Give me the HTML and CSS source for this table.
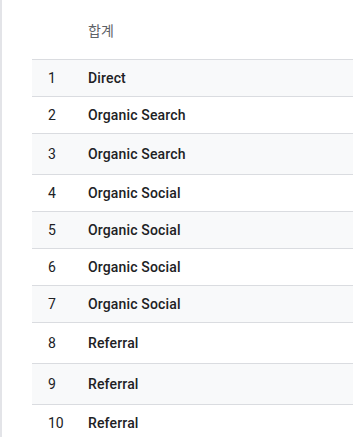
FILE: index.html
```html
<!DOCTYPE html>
<html lang="ko">
<head>
<meta charset="utf-8">
<link rel="stylesheet" href="styles.css">
</head>
<body>
<div class="page">
  <div class="table">
    <div class="head">
      <div class="num"></div>
      <div class="label head-label">합계</div>
    </div>
    <div class="row odd"><div class="num">1</div><div class="label">Direct</div></div>
    <div class="row"><div class="num">2</div><div class="label">Organic Search</div></div>
    <div class="row odd tall"><div class="num">3</div><div class="label">Organic Search</div></div>
    <div class="row"><div class="num">4</div><div class="label">Organic Social</div></div>
    <div class="row odd"><div class="num">5</div><div class="label">Organic Social</div></div>
    <div class="row"><div class="num">6</div><div class="label">Organic Social</div></div>
    <div class="row odd"><div class="num">7</div><div class="label">Organic Social</div></div>
    <div class="row tall"><div class="num">8</div><div class="label">Referral</div></div>
    <div class="row odd tall"><div class="num">9</div><div class="label">Referral</div></div>
    <div class="row"><div class="num">10</div><div class="label">Referral</div></div>
  </div>
</div>
</body>
</html>
```
FILE: styles.css
```css
html, body {
  margin: 0;
  padding: 0;
  background: #ffffff;
}
body {
  font-family: Roboto, "Noto Sans CJK KR", "Liberation Sans", sans-serif;
  color: #202124;
  overflow: hidden;
}
.page {
  height: 437px;
  border-left: 2px solid #e3e4e8;
  padding-left: 30px;
  box-sizing: border-box;
}
.table {
  display: flex;
  flex-direction: column;
}
.head {
  display: flex;
  align-items: center;
  height: 59px;
  border-bottom: 1px solid #dadce0;
}
.row {
  display: flex;
  align-items: center;
  height: 36px;
  border-bottom: 1px solid #dadce0;
  font-size: 14px;
}
.row.tall {
  height: 40px;
}
.row.odd {
  background: #f8f9fa;
}
.num {
  width: 40px;
  padding-left: 16px;
  font-weight: 400;
  color: #202124;
}
.label {
  font-weight: 500;
  color: #202124;
  letter-spacing: 0.15px;
}
.head-label {
  font-family: "Noto Sans CJK KR", sans-serif;
  font-size: 14px;
  font-weight: 400;
  letter-spacing: 0;
  color: #5f6368;
}
```
